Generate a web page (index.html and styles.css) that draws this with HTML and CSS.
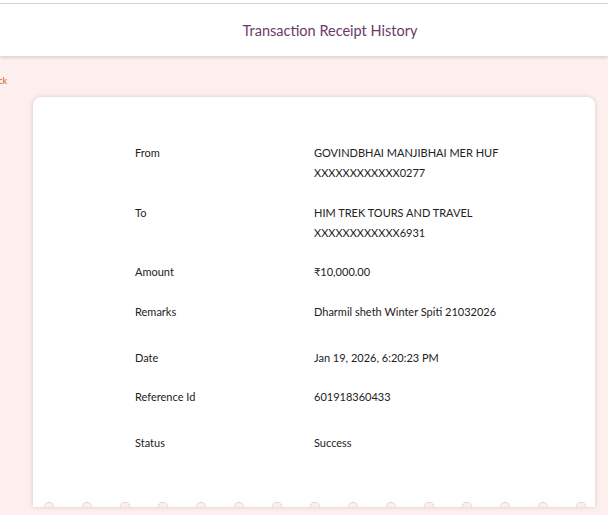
FILE: index.html
```html
<!DOCTYPE html>
<html lang="en">
<head>
<meta charset="utf-8">
<title>Transaction Receipt History</title>
<link rel="stylesheet" href="styles.css">
</head>
<body>
  <div class="top-strip"></div>
  <header class="app-header">
    <h1 class="app-title">Transaction Receipt History</h1>
  </header>
  <main class="content">
    <a class="back-link" href="#">Back</a>
    <section class="receipt">
      <dl class="details">
        <div class="row">
          <dt>From</dt>
          <dd>GOVINDBHAI MANJIBHAI MER HUF<br>XXXXXXXXXXXX0277</dd>
        </div>
        <div class="row">
          <dt>To</dt>
          <dd>HIM TREK TOURS AND TRAVEL<br>XXXXXXXXXXXX6931</dd>
        </div>
        <div class="row">
          <dt>Amount</dt>
          <dd>₹10,000.00</dd>
        </div>
        <div class="row row-loose">
          <dt>Remarks</dt>
          <dd>Dharmil sheth Winter Spiti 21032026</dd>
        </div>
        <div class="row">
          <dt>Date</dt>
          <dd>Jan 19, 2026, 6:20:23 PM</dd>
        </div>
        <div class="row row-loose">
          <dt>Reference Id</dt>
          <dd>601918360433</dd>
        </div>
        <div class="row">
          <dt>Status</dt>
          <dd>Success</dd>
        </div>
      </dl>
      <div class="scallop"></div>
    </section>
  </main>
</body>
</html>
```
FILE: styles.css
```css
html {
  background: #ffffff;
}

body {
  margin: 0;
  background: #fdefee;
  font-family: Lato, "Open Sans", sans-serif;
  color: #222222;
  overflow: hidden;
  height: 515px;
}

.top-strip {
  height: 3px;
  background: #ffffff;
}

.app-header {
  position: relative;
  z-index: 1;
  height: 52px;
  background: #ffffff;
  border-top: 1px solid #d2d2d2;
  box-shadow: 0 2px 3px rgba(0, 0, 0, 0.12);
  display: flex;
  align-items: center;
  justify-content: center;
  padding-left: 52px;
}

.app-title {
  margin: 0;
  font-size: 14.5px;
  font-weight: 400;
  color: #6a3b68;
}

.content {
  padding-top: 19px;
}

.back-link {
  display: block;
  margin-left: -12px;
  font-size: 9px;
  line-height: 12px;
  color: #d0602c;
  text-decoration: none;
}

.receipt {
  margin: 10px 13px 0 33px;
  height: 410px;
  background: #ffffff;
  border-radius: 8px 8px 0 0;
  box-shadow: 0 0 4px rgba(0, 0, 0, 0.16);
  display: flex;
  flex-direction: column;
}

.details {
  margin: 0;
  padding: 46px 0 0 102px;
  display: flex;
  flex-direction: column;
  gap: 19.5px;
}

.row {
  display: grid;
  grid-template-columns: 179px 1fr;
  font-size: 11px;
  line-height: 20px;
}

.row-loose {
  margin-bottom: 6.5px;
}

.row dt,
.row dd {
  margin: 0;
}

.scallop {
  margin-top: auto;
  height: 6px;
  background-image: radial-gradient(circle at 50% 100%, #fdefee 0, #fdefee 4px, #dcd6d6 4.6px, rgba(255, 255, 255, 0) 5.6px);
  background-size: 38px 6px;
  background-position: -3px 0;
  background-repeat: repeat-x;
}
```
